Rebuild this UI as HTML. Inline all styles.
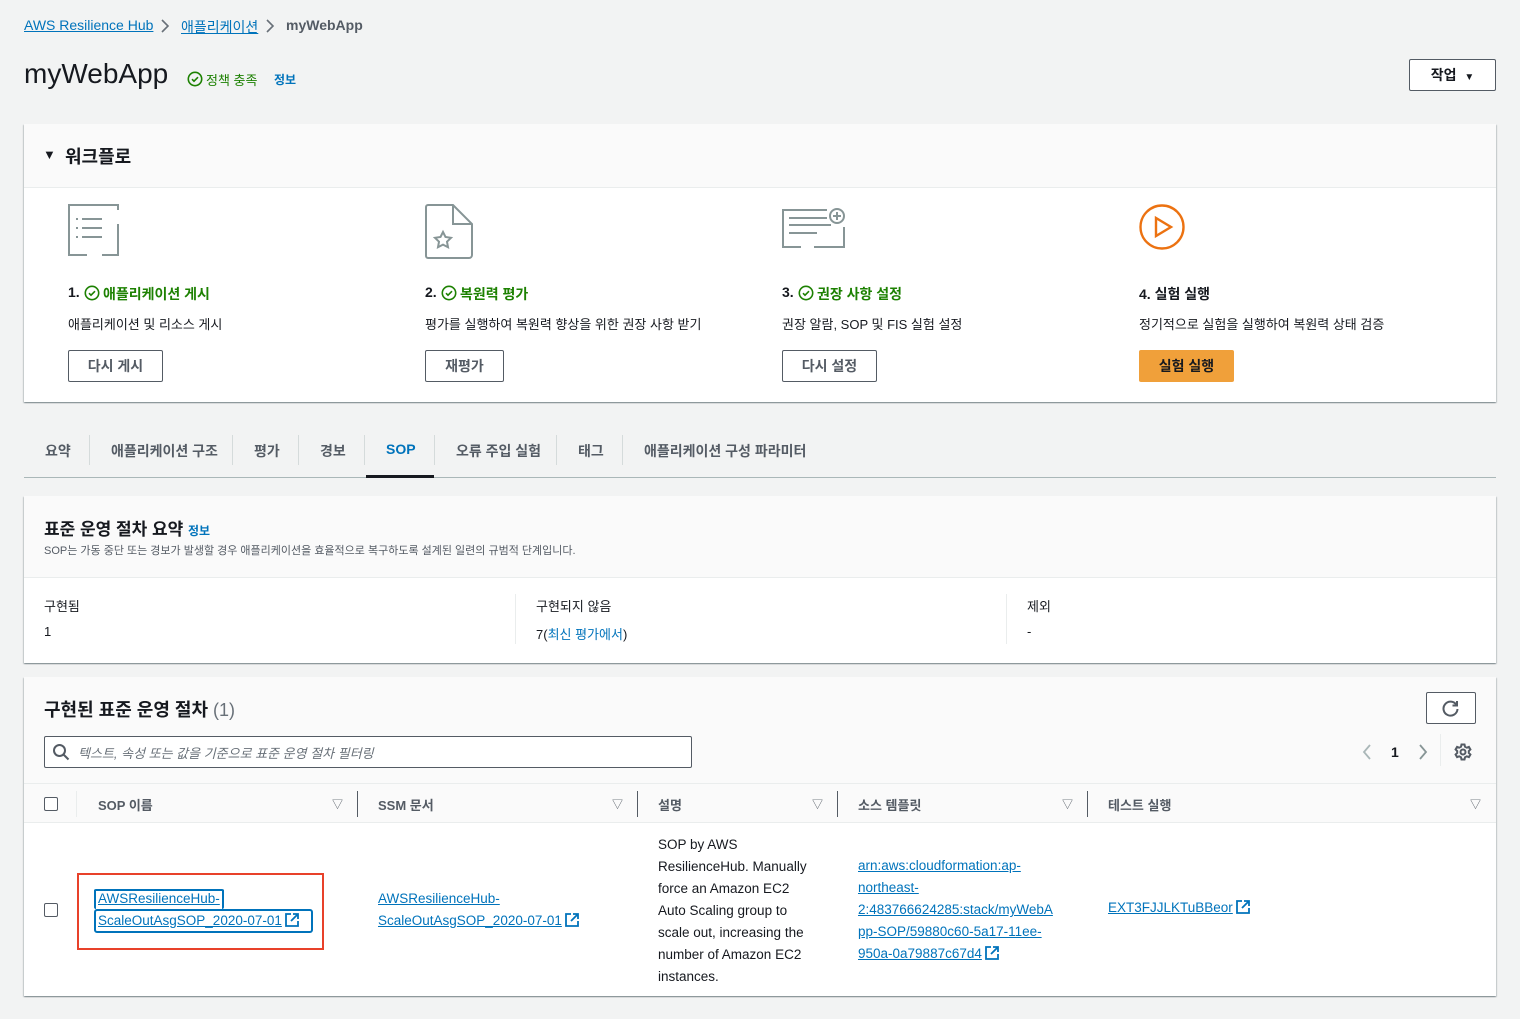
<!DOCTYPE html>
<html><head><meta charset="utf-8"><style>
*{box-sizing:border-box;margin:0;padding:0}
body{width:1520px;height:1019px;background:#f2f3f3;font-family:"Liberation Sans","Noto Sans CJK KR",sans-serif;color:#16191f;position:relative;overflow:hidden;font-size:14px}
.a{position:absolute;white-space:nowrap}
.lnk{color:#0073bb;text-decoration:underline}
.card{position:absolute;background:#fff;box-shadow:0 1px 1px 0 rgba(0,28,36,.3),1px 1px 1px 0 rgba(0,28,36,.15),-1px 1px 1px 0 rgba(0,28,36,.15)}
.hdr{position:absolute;left:0;right:0;top:0;background:#fafafa;border-bottom:1px solid #eaeded}
.btn{position:absolute;border:1px solid #545b64;border-radius:2px;background:#fff;font-weight:bold;color:#545b64;text-align:center;font-size:14px}
.g{color:#1d8102;font-weight:bold}
.sep{position:absolute;width:1px;background:#d5dbdb}
.ext{display:inline-block;vertical-align:-2px;margin-left:3px}
</style></head><body>
<div class="a" style="left:24px;top:17px;font-size:14px"><span class="lnk">AWS Resilience Hub</span></div>
<svg class="a" style="left:159px;top:18px" width="12" height="16" viewBox="0 0 12 16" fill="none" stroke="#687078" stroke-width="1.6"><path d="M3 2l6 6-6 6"/></svg>
<div class="a" style="left:181px;top:17px"><span class="lnk">애플리케이션</span></div>
<svg class="a" style="left:264px;top:18px" width="12" height="16" viewBox="0 0 12 16" fill="none" stroke="#687078" stroke-width="1.6"><path d="M3 2l6 6-6 6"/></svg>
<div class="a" style="left:286px;top:17px;color:#545b64;font-weight:bold">myWebApp</div>
<div class="a" style="left:24px;top:58px;font-size:28px">myWebApp</div>
<svg class="a" style="left:187px;top:71px" width="16" height="16" viewBox="0 0 16 16"><circle cx="8" cy="8" r="6.7" fill="none" stroke="#1d8102" stroke-width="1.6"/><path d="M5 8.2l2 2 4-4" fill="none" stroke="#1d8102" stroke-width="1.6"/></svg>
<div class="a" style="left:206px;top:70px;font-size:13px;color:#1d8102">정책 충족</div>
<div class="a" style="left:274px;top:71px;font-size:12px;color:#0073bb;font-weight:bold">정보</div>
<div class="btn" style="left:1409px;top:59px;width:87px;height:32px;line-height:30px;color:#16191f;border-color:#545b64">작업 &nbsp;<span style="font-size:10px">▼</span></div>

<div class="card" style="left:24px;top:124px;width:1472px;height:278px">
 <div class="hdr" style="height:64px"></div>
 <div class="a" style="left:19px;top:23px;font-size:13px">▼</div>
 <div class="a" style="left:41px;top:19px;font-size:18px;font-weight:bold">워크플로</div>
</div>
<svg class="a" style="left:68px;top:204px" width="52" height="52" viewBox="0 0 52 52" fill="none" stroke="#879596" stroke-width="2"><path d="M50 6V1H1v50h18M34 51h16V20"/><path d="M14 15h20M14 24h20M14 33h20M8 15h2M8 24h2M8 33h2"/></svg>
<svg class="a" style="left:425px;top:204px" width="50" height="56" viewBox="0 0 50 56" fill="none" stroke="#879596" stroke-width="2"><path d="M3 1h25l19 19v31a3 3 0 0 1-3 3H3a2 2 0 0 1-2-2V3a2 2 0 0 1 2-2zM28 1v19h19"/><path d="M18 28l2.5 5 5.5.8-4 3.9 1 5.5-5-2.6-5 2.6 1-5.5-4-3.9 5.5-.8z"/></svg>
<svg class="a" style="left:782px;top:207px" width="66" height="44" viewBox="0 0 66 44" fill="none" stroke="#879596" stroke-width="2"><path d="M45 3H1v37h18M32 40h30V20"/><path d="M7 11h38M7 18h42M7 26h28"/><circle cx="55" cy="9" r="7"/><path d="M55 5v8M51 9h8"/></svg>
<svg class="a" style="left:1139px;top:204px" width="48" height="48" viewBox="0 0 48 48" fill="none" stroke="#ec7211" stroke-width="2.4"><circle cx="23" cy="23" r="21.5"/><path d="M17 14v18l15-9z"/></svg>

<div class="a" style="left:68px;top:284px;font-weight:bold">1.</div>
<svg class="a" style="left:84px;top:285px" width="16" height="16" viewBox="0 0 16 16"><circle cx="8" cy="8" r="6.7" fill="none" stroke="#1d8102" stroke-width="1.6"/><path d="M5 8.2l2 2 4-4" fill="none" stroke="#1d8102" stroke-width="1.6"/></svg>
<div class="a g" style="left:103px;top:284px">애플리케이션 게시</div>
<div class="a" style="left:68px;top:314px;font-size:13px">애플리케이션 및 리소스 게시</div>
<div class="btn" style="left:68px;top:350px;width:95px;height:32px;line-height:30px">다시 게시</div>

<div class="a" style="left:425px;top:284px;font-weight:bold">2.</div>
<svg class="a" style="left:441px;top:285px" width="16" height="16" viewBox="0 0 16 16"><circle cx="8" cy="8" r="6.7" fill="none" stroke="#1d8102" stroke-width="1.6"/><path d="M5 8.2l2 2 4-4" fill="none" stroke="#1d8102" stroke-width="1.6"/></svg>
<div class="a g" style="left:460px;top:284px">복원력 평가</div>
<div class="a" style="left:425px;top:314px;font-size:13px">평가를 실행하여 복원력 향상을 위한 권장 사항 받기</div>
<div class="btn" style="left:425px;top:350px;width:79px;height:32px;line-height:30px">재평가</div>

<div class="a" style="left:782px;top:284px;font-weight:bold">3.</div>
<svg class="a" style="left:798px;top:285px" width="16" height="16" viewBox="0 0 16 16"><circle cx="8" cy="8" r="6.7" fill="none" stroke="#1d8102" stroke-width="1.6"/><path d="M5 8.2l2 2 4-4" fill="none" stroke="#1d8102" stroke-width="1.6"/></svg>
<div class="a g" style="left:817px;top:284px">권장 사항 설정</div>
<div class="a" style="left:782px;top:314px;font-size:13px">권장 알람, SOP 및 FIS 실험 설정</div>
<div class="btn" style="left:782px;top:350px;width:95px;height:32px;line-height:30px">다시 설정</div>

<div class="a" style="left:1139px;top:284px;font-weight:bold">4. 실험 실행</div>
<div class="a" style="left:1139px;top:314px;font-size:13px">정기적으로 실험을 실행하여 복원력 상태 검증</div>
<div class="btn" style="left:1139px;top:350px;width:95px;height:32px;line-height:32px;background:#f0a03a;border:none;color:#16191f">실험 실행</div>

<div class="a" style="left:24px;top:477px;width:1472px;height:1px;background:#aab7b8"></div>
<div class="a" style="left:366px;top:475px;width:68px;height:3px;background:#16191f"></div>
<div class="a" style="left:45px;top:441px;font-weight:bold;color:#545b64">요약</div>
<div class="sep" style="left:89px;top:435px;height:30px"></div>
<div class="a" style="left:111px;top:441px;font-weight:bold;color:#545b64">애플리케이션 구조</div>
<div class="sep" style="left:232px;top:435px;height:30px"></div>
<div class="a" style="left:254px;top:441px;font-weight:bold;color:#545b64">평가</div>
<div class="sep" style="left:298px;top:435px;height:30px"></div>
<div class="a" style="left:320px;top:441px;font-weight:bold;color:#545b64">경보</div>
<div class="sep" style="left:364px;top:435px;height:30px"></div>
<div class="a" style="left:386px;top:441px;font-weight:bold;color:#0073bb">SOP</div>
<div class="sep" style="left:434px;top:435px;height:30px"></div>
<div class="a" style="left:456px;top:441px;font-weight:bold;color:#545b64">오류 주입 실험</div>
<div class="sep" style="left:556px;top:435px;height:30px"></div>
<div class="a" style="left:578px;top:441px;font-weight:bold;color:#545b64">태그</div>
<div class="sep" style="left:622px;top:435px;height:30px"></div>
<div class="a" style="left:644px;top:441px;font-weight:bold;color:#545b64">애플리케이션 구성 파라미터</div>

<div class="card" style="left:24px;top:496px;width:1472px;height:167px">
 <div class="hdr" style="height:82px"></div>
 <div class="a" style="left:20px;top:19px;font-size:17px;font-weight:bold">표준 운영 절차 요약 <span style="font-size:12px;color:#0073bb">정보</span></div>
 <div class="a" style="left:20px;top:46px;font-size:11px;color:#545b64">SOP는 가동 중단 또는 경보가 발생할 경우 애플리케이션을 효율적으로 복구하도록 설계된 일련의 규범적 단계입니다.</div>
 <div class="a" style="left:20px;top:100px;font-size:13px">구현됨</div>
 <div class="a" style="left:20px;top:128px;font-size:13px">1</div>
 <div class="sep" style="left:491px;top:98px;height:50px;background:#eaeded"></div>
 <div class="a" style="left:512px;top:100px;font-size:13px">구현되지 않음</div>
 <div class="a" style="left:512px;top:128px;font-size:13px">7(<span style="color:#0073bb">최신 평가에서</span>)</div>
 <div class="sep" style="left:982px;top:98px;height:50px;background:#eaeded"></div>
 <div class="a" style="left:1003px;top:100px;font-size:13px">제외</div>
 <div class="a" style="left:1003px;top:128px;font-size:13px">-</div>
</div>

<div class="card" style="left:24px;top:677px;width:1472px;height:319px">
 <div class="hdr" style="height:146px;border-bottom:1px solid #eaeded"></div>
 <div class="a" style="left:0;right:0;top:106px;height:1px;background:#eaeded"></div>
 <div class="a" style="left:20px;top:19px;font-size:18px;font-weight:bold">구현된 표준 운영 절차 <span style="font-weight:normal;color:#687078">(1)</span></div>
 <div class="btn" style="left:1402px;top:15px;width:50px;height:32px"></div>
 <svg class="a" style="left:1418px;top:22px" width="18" height="18" viewBox="0 0 18 18" fill="none" stroke="#545b64" stroke-width="2"><path d="M14.5 6A7 7 0 1 0 15.5 10"/><path d="M15 2v4.5h-4.5"/></svg>
 <div class="a" style="left:20px;top:59px;width:648px;height:32px;border:1px solid #545b64;border-radius:2px;background:#fff"></div>
 <svg class="a" style="left:28px;top:66px" width="18" height="18" viewBox="0 0 18 18" fill="none" stroke="#545b64" stroke-width="2"><circle cx="7.5" cy="7.5" r="5.5"/><path d="M11.5 11.5l5 5"/></svg>
 <div class="a" style="left:54px;top:66px;font-size:13px;font-style:italic;color:#687078">텍스트, 속성 또는 값을 기준으로 표준 운영 절차 필터링</div>
 <svg class="a" style="left:1337px;top:66px" width="12" height="18" viewBox="0 0 12 18" fill="none" stroke="#aab7b8" stroke-width="1.8"><path d="M9 2L3 9l6 7"/></svg>
 <div class="a" style="left:1367px;top:67px;font-weight:bold">1</div>
 <svg class="a" style="left:1393px;top:66px" width="12" height="18" viewBox="0 0 12 18" fill="none" stroke="#879596" stroke-width="1.8"><path d="M3 2l6 7-6 7"/></svg>
 <div class="sep" style="left:1416px;top:57px;height:32px;background:#eaeded"></div>
 <svg class="a" style="left:1430px;top:66px" width="18" height="18" viewBox="0 0 18 18" fill="none" stroke="#545b64" stroke-width="2"><circle cx="9" cy="9" r="2.5"/><path d="M7.5 1.5h3l.5 2.2 1.8 1 2.1-.8 1.5 2.6-1.6 1.5v2l1.6 1.5-1.5 2.6-2.1-.8-1.8 1-.5 2.2h-3l-.5-2.2-1.8-1-2.1.8-1.5-2.6L3.2 10V8L1.6 6.5 3.1 3.9l2.1.8 1.8-1z"/></svg>
 <div class="a" style="left:20px;top:120px;width:14px;height:14px;border:1.5px solid #545b64;border-radius:2px;background:#fff"></div>
 <div class="sep" style="left:52px;top:114px;height:26px;background:#eaeded"></div>
 <div class="a" style="left:74px;top:118px;font-size:13px;font-weight:bold;color:#545b64">SOP 이름</div>
 <div class="a" style="left:308px;top:119px;font-size:11px;color:#545b64">▽</div>
 <div class="sep" style="left:333px;top:114px;height:26px;background:#545b64"></div>
 <div class="a" style="left:354px;top:118px;font-size:13px;font-weight:bold;color:#545b64">SSM 문서</div>
 <div class="a" style="left:588px;top:119px;font-size:11px;color:#545b64">▽</div>
 <div class="sep" style="left:613px;top:114px;height:26px;background:#545b64"></div>
 <div class="a" style="left:634px;top:118px;font-size:13px;font-weight:bold;color:#545b64">설명</div>
 <div class="a" style="left:788px;top:119px;font-size:11px;color:#545b64">▽</div>
 <div class="sep" style="left:813px;top:114px;height:26px;background:#545b64"></div>
 <div class="a" style="left:834px;top:118px;font-size:13px;font-weight:bold;color:#545b64">소스 템플릿</div>
 <div class="a" style="left:1038px;top:119px;font-size:11px;color:#545b64">▽</div>
 <div class="sep" style="left:1063px;top:114px;height:26px;background:#545b64"></div>
 <div class="a" style="left:1084px;top:118px;font-size:13px;font-weight:bold;color:#545b64">테스트 실행</div>
 <div class="a" style="left:1446px;top:119px;font-size:11px;color:#545b64">▽</div>
 <div class="a" style="left:20px;top:226px;width:14px;height:14px;border:1.5px solid #545b64;border-radius:2px;background:#fff"></div>
 <div class="a" style="left:53px;top:196px;width:247px;height:77px;border:2px solid #e8412a"></div>
 <div class="a" style="left:70px;top:212px;width:130px;height:20px;border:2px solid #0073bb;border-bottom:none;border-radius:2px"></div>
 <div class="a" style="left:70px;top:232px;width:219px;height:24px;border:2px solid #0073bb;border-radius:3px"></div>
 <div class="a lnk" style="left:74px;top:211px;font-size:13.5px;line-height:22px">AWSResilienceHub-<br>ScaleOutAsgSOP_2020-07-01<svg class="ext" width="14" height="14" viewBox="0 0 14 14" fill="none" stroke="#0073bb" stroke-width="1.8"><path d="M6 1H1v12h12V8M8 1h5v5M13 1L6 8"/></svg></div>
 <div class="a lnk" style="left:354px;top:211px;font-size:13.5px;line-height:22px">AWSResilienceHub-<br>ScaleOutAsgSOP_2020-07-01<svg class="ext" width="14" height="14" viewBox="0 0 14 14" fill="none" stroke="#0073bb" stroke-width="1.8"><path d="M6 1H1v12h12V8M8 1h5v5M13 1L6 8"/></svg></div>
 <div class="a" style="left:634px;top:157px;font-size:13.5px;line-height:22px">SOP by AWS<br>ResilienceHub. Manually<br>force an Amazon EC2<br>Auto Scaling group to<br>scale out, increasing the<br>number of Amazon EC2<br>instances.</div>
 <div class="a lnk" style="left:834px;top:178px;font-size:13.5px;line-height:22px">arn:aws:cloudformation:ap-<br>northeast-<br>2:483766624285:stack/myWebA<br>pp-SOP/59880c60-5a17-11ee-<br>950a-0a79887c67d4<svg class="ext" width="14" height="14" viewBox="0 0 14 14" fill="none" stroke="#0073bb" stroke-width="1.8"><path d="M6 1H1v12h12V8M8 1h5v5M13 1L6 8"/></svg></div>
 <div class="a lnk" style="left:1084px;top:223px;font-size:13.5px">EXT3FJJLKTuBBeor<svg class="ext" width="14" height="14" viewBox="0 0 14 14" fill="none" stroke="#0073bb" stroke-width="1.8"><path d="M6 1H1v12h12V8M8 1h5v5M13 1L6 8"/></svg></div>
</div>
</body></html>
